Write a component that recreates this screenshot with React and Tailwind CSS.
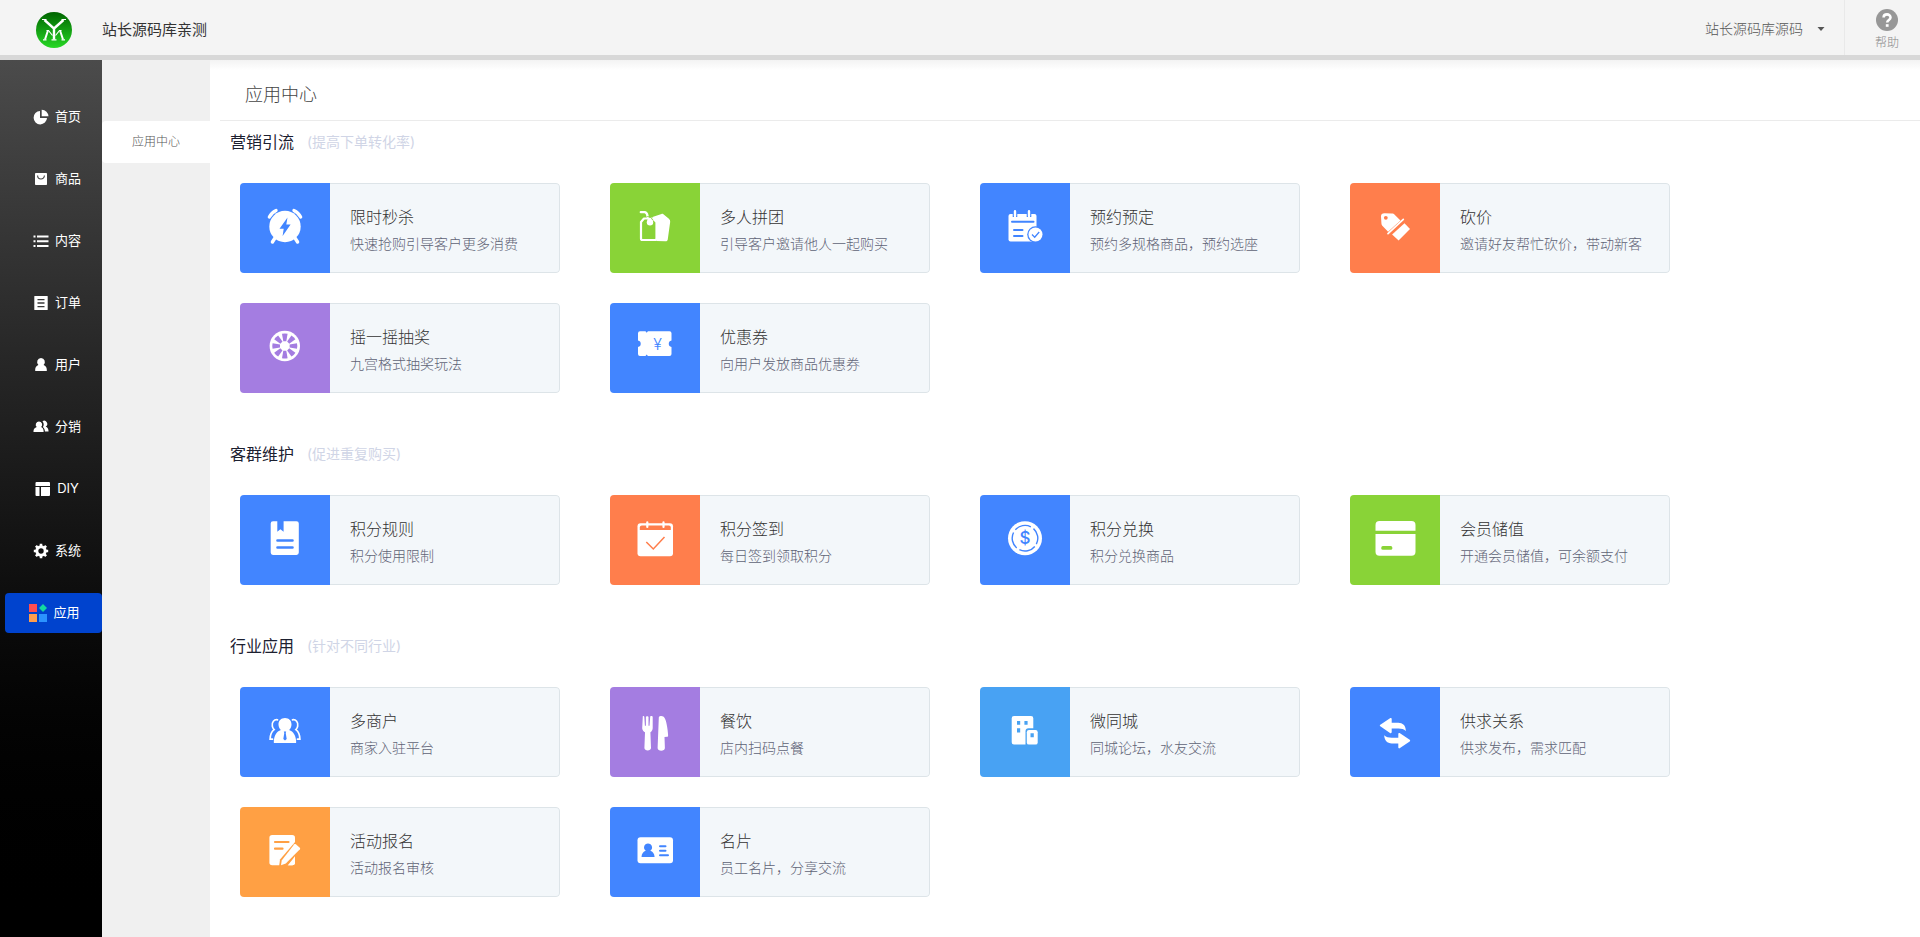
import { useState } from 'react';

const menu = [
  { key: 'home', label: '首页' },
  { key: 'goods', label: '商品' },
  { key: 'content', label: '内容' },
  { key: 'order', label: '订单' },
  { key: 'user', label: '用户' },
  { key: 'share', label: '分销' },
  { key: 'diy', label: 'DIY' },
  { key: 'setting', label: '系统' },
  { key: 'apps', label: '应用' },
];

const groups = [
  {
    title: '营销引流',
    note: '(提高下单转化率)',
    apps: [
      { icon: 'clock', bg: 'bg-[#4285ff]', name: '限时秒杀', desc: '快速抢购引导客户更多消费' },
      { icon: 'tags', bg: 'bg-[#89d337]', name: '多人拼团', desc: '引导客户邀请他人一起购买' },
      { icon: 'booking', bg: 'bg-[#4285ff]', name: '预约预定', desc: '预约多规格商品，预约选座' },
      { icon: 'bargain', bg: 'bg-[#ff7e4c]', name: '砍价', desc: '邀请好友帮忙砍价，带动新客' },
      { icon: 'wheel', bg: 'bg-[#a47de1]', name: '摇一摇抽奖', desc: '九宫格式抽奖玩法' },
      { icon: 'coupon', bg: 'bg-[#4285ff]', name: '优惠券', desc: '向用户发放商品优惠券' },
    ],
  },
  {
    title: '客群维护',
    note: '(促进重复购买)',
    apps: [
      { icon: 'rules', bg: 'bg-[#4285ff]', name: '积分规则', desc: '积分使用限制' },
      { icon: 'signin', bg: 'bg-[#ff7e4c]', name: '积分签到', desc: '每日签到领取积分' },
      { icon: 'coin', bg: 'bg-[#4285ff]', name: '积分兑换', desc: '积分兑换商品' },
      { icon: 'card', bg: 'bg-[#89d337]', name: '会员储值', desc: '开通会员储值，可余额支付' },
    ],
  },
  {
    title: '行业应用',
    note: '(针对不同行业)',
    apps: [
      { icon: 'merchant', bg: 'bg-[#4285ff]', name: '多商户', desc: '商家入驻平台' },
      { icon: 'food', bg: 'bg-[#a47de1]', name: '餐饮', desc: '店内扫码点餐' },
      { icon: 'city', bg: 'bg-[#48a2f3]', name: '微同城', desc: '同城论坛，水友交流' },
      { icon: 'supply', bg: 'bg-[#4285ff]', name: '供求关系', desc: '供求发布，需求匹配' },
      { icon: 'form', bg: 'bg-[#ffa044]', name: '活动报名', desc: '活动报名审核' },
      { icon: 'idcard', bg: 'bg-[#4285ff]', name: '名片', desc: '员工名片，分享交流' },
    ],
  },
];

const menuIcons = {
  home: (
    <>
      <path d="M7 2a6.7 6.7 0 1 0 7 7H7z" />
      <path d="M8.7 0.8a6.7 6.7 0 0 1 6.8 6.5H8.7z" />
    </>
  ),
  goods: (
    <>
      <rect x="2" y="2" width="12" height="12" rx="0.8" />
      <path d="M4.6 4.5c0 4.6 6.8 4.6 6.8 0" fill="none" stroke="#444" strokeWidth="1.1" />
    </>
  ),
  content: (
    <path d="M0.5 2.5h2v2h-2zM4 2.5h11.5v2H4zM0.5 7.2h2v2h-2zM4 7.2h11.5v2H4zM0.5 12h2v2h-2zM4 12h11.5v2H4z" />
  ),
  order: (
    <>
      <rect x="1.3" y="1" width="13.4" height="14" rx="0.5" />
      <path d="M4.5 4.6h7M4.5 8h7M4.5 11.6h7" stroke="#383838" strokeWidth="1.4" />
    </>
  ),
  user: (
    <path d="M8 1a4 4 0 0 1 2.6 6.9c2 .8 3.2 2.4 3.2 4.6V14H2.2v-1.5c0-2.2 1.2-3.8 3.2-4.6A4 4 0 0 1 8 1z" />
  ),
  share: (
    <>
      <path d="M6 2.6a3.2 3.2 0 0 1 2.2 5.5c1.5.7 2.4 2.1 2.4 3.9V13H.5v-1c0-1.8 1.3-3.2 3.2-3.9A3.2 3.2 0 0 1 6 2.6z" />
      <path d="M9.5 2.2a3 3 0 0 1 3.2 5.3c1.8.9 2.8 2.5 2.8 4.2V12.6h-3.6c0-2-.7-3.5-2-4.7 1.2-1.6 1.1-3.9-.4-5.7z" />
    </>
  ),
  diy: (
    <path d="M1.5 1h12.5a1 1 0 0 1 1 1v3H.5V2a1 1 0 0 1 1-1zM.5 6h4v9h-3a1 1 0 0 1-1-1zM6 6h9v8a1 1 0 0 1-1 1H6z" />
  ),
  setting: (
    <>
      <circle cx="8" cy="8" r="4.2" fill="none" stroke="#fff" strokeWidth="3" />
      <path
        d="M8 .8v3M8 12.2v3M.8 8h3M12.2 8h3M2.9 2.9l2 2M11.1 11.1l2 2M2.9 13.1l2-2M11.1 4.9l2-2"
        stroke="#fff"
        strokeWidth="2.6"
      />
    </>
  ),
};

function MenuIcon({ name }) {
  if (name === 'apps') {
    return (
      <svg className="h-[18px] w-[18px]" viewBox="0 0 18 18" aria-hidden="true">
        <rect x="0" y="0" width="8" height="8" fill="#ff4d4f" />
        <path d="M14 0l4 4-4 4-4-4z" fill="#13d8a0" />
        <rect x="0" y="10" width="8" height="8" fill="#ff9d4d" />
        <rect x="10" y="10" width="8" height="8" fill="#2b93ff" />
      </svg>
    );
  }
  return (
    <svg className="h-4 w-4" viewBox="0 0 16 16" fill="#fff" aria-hidden="true">
      {menuIcons[name]}
    </svg>
  );
}

// white shapes, details are cut out in the colour of the tile
const appIcons = {
  clock: (
    <>
      <circle cx="20" cy="20.5" r="15.7" />
      <path d="M4.3 11c1.5-3 4-5.2 6.8-6.5M35.7 11c-1.5-3-4-5.2-6.8-6.5" fill="none" stroke="#fff" strokeWidth="3.2" strokeLinecap="round" />
      <path d="M10 32l-2.6 4M30 32l2.6 4" stroke="#fff" strokeWidth="3.4" strokeLinecap="round" />
      <path d="M22.5 11.5l-8 11.2h4.2L17.6 30l8-11.5h-4.3z" fill="#4285ff" />
    </>
  ),
  tags: (
    <>
      <path d="M9 12.5h9l3.5 3.5v16.5a1.5 1.5 0 0 1-1.5 1.5H7.5A1.5 1.5 0 0 1 6 32.5V16z" fill="none" stroke="#fff" strokeWidth="2.2" strokeLinejoin="round" />
      <path d="M17.5 11l9-3.1c.6-.2 1.1-.1 1.6.2l5.5 4.3c1.4 1.2 1.8 2.4 1.5 4.2L32.8 33.3c-.3 1.6-1 2.1-2.6 2l-8.7-.3V16z" />
      <path d="M5.8 6.2h3.7c4.5 0 1.5 5.8 5.3 8.3" fill="none" stroke="#fff" strokeWidth="2.3" strokeLinecap="round" />
      <circle cx="15" cy="16.3" r="3.2" />
      <path d="M12.3 10.5c2.2.3 4.4 1.2 5.5 3.3" fill="none" stroke="#89d337" strokeWidth="1" />
    </>
  ),
  booking: (
    <>
      <rect x="3.5" y="8" width="28" height="27.5" rx="2" />
      <path d="M10 6.5V11M24 6.5V11" stroke="#4285ff" strokeWidth="4.6" />
      <path d="M10 5.3v4.7M24 5.3v4.7" stroke="#fff" strokeWidth="2.4" strokeLinecap="round" />
      <path d="M7 15.8h21.5M9 24h8.5M9 30h8.5" stroke="#4285ff" strokeWidth="2" strokeLinecap="round" />
      <circle cx="30.5" cy="28.5" r="8.3" fill="#4285ff" />
      <circle cx="30.5" cy="28.5" r="7" />
      <path d="M27 28.5l2.7 2.7 4.5-5.2" fill="none" stroke="#4285ff" strokeWidth="1.3" />
    </>
  ),
  bargain: (
    <>
      <path d="M9.5 7.2l7.3.3c1.3 0 2.2.5 3.1 1.4l5.6 5.5-12.4 11.4-5.3-5.5c-1-1-1.4-2-1.4-3.2L6 10.5c0-2.2 1.2-3.3 3.5-3.3z" />
      <circle cx="10.8" cy="11.8" r="1.9" fill="#ff7e4c" />
      <path d="M13 27.7L28.3 13.4" stroke="#fff" strokeWidth="1.7" strokeLinecap="round" />
      <path d="M29.5 17.2l5.5 5.9-11.4 11.4-6.5-6z" />
    </>
  ),
  wheel: (
    <>
      <circle cx="19.8" cy="20" r="15.2" />
      {[0, 45, 90, 135, 180, 225, 270, 315].map((deg) => (
        <path key={deg} d="M17 7.8q2.8-.7 5.6 0l-1.3 7.4h-3z" fill="#a47de1" transform={`rotate(${deg} 19.8 20)`} />
      ))}
    </>
  ),
  coupon: (
    <>
      <path d="M5 5.3h5.5l1.2 1.4 1.2-1.4H34.5a2 2 0 0 1 2 2v7.2a3.3 3.3 0 0 0 0 6.5v7a2 2 0 0 1-2 2H12.900l-1.200-1.400-1.200 1.400H5a2 2 0 0 1-2-2v-7a3.300 3.300 0 0 0 0-6.500V7.300a2 2 0 0 1 2-2z" />
      <text x="22.5" y="24" textAnchor="middle" fontSize="16" fill="#4285ff">¥</text>
    </>
  ),
  rules: (
    <>
      <path d="M8 3.3h4.3v10.4l3.1-2.4 3.2 2.4V3.3H31.5a2.3 2.3 0 0 1 2.3 2.3v29a2.3 2.3 0 0 1-2.3 2.3H8a2.3 2.3 0 0 1-2.3-2.3v-29A2.3 2.3 0 0 1 8 3.3z" />
      <path d="M12.5 22.5h15M12.5 29.5h15" stroke="#4285ff" strokeWidth="2.6" strokeLinecap="round" />
    </>
  ),
  signin: (
    <>
      <rect x="2.5" y="5.3" width="35.5" height="33" rx="3" />
      <path d="M4.8 12V9.5a2 2 0 0 1 2-2h27a2 2 0 0 1 2 2V12z" fill="#ff7e4c" />
      <path d="M12.3 4.3V9M28.5 4.3V9" stroke="#fff" strokeWidth="2.2" strokeLinecap="round" />
      <path d="M11.3 24l7 7L29.5 19" fill="none" stroke="#ff7e4c" strokeWidth="1.5" />
    </>
  ),
  coin: (
    <>
      <circle cx="20" cy="20.2" r="17" />
      <circle cx="20" cy="20.2" r="12.8" fill="none" stroke="#4285ff" strokeWidth="1.4" strokeDasharray="16.8 3.3" transform="rotate(40 20 20.2)" />
      <text x="20" y="26" textAnchor="middle" fontSize="17" fontWeight="500" fill="#4285ff">$</text>
    </>
  ),
  card: (
    <>
      <path d="M4.5 3h32a4 4 0 0 1 4 4v5.7H.5V7a4 4 0 0 1 4-4zM.5 16h40v17.700a4 4 0 0 1-4 4h-32a4 4 0 0 1-4-4z" />
      <rect x="6.3" y="28" width="11" height="3.8" rx="1.5" fill="#89d337" />
    </>
  ),
  merchant: (
    <>
      <path
        d="M12.5 9.8c-3.4-.6-5.9 2.5-5.2 6.3.3 1.6.9 2.6 1.8 3.5-2.5 1.8-3.9 5.2-4 9.6h2.4M27.5 9.8c3.4-.6 5.9 2.5 5.2 6.3-.3 1.6-.9 2.6-1.8 3.5 2.5 1.8 3.9 5.2 4 9.6h-2.4"
        fill="none"
        stroke="#fff"
        strokeWidth="1.7"
        strokeLinecap="round"
      />
      <path d="M20 8c4 0 6.7 2.8 6.5 6.7-.1 2.2-1 4-2.4 5.2 4.3 1.3 6.9 5.8 7.1 12 0 .8-.3 1.2-1 1.2H9.8c-.7 0-1.1-.4-1-1.2.2-6.2 2.7-10.7 7.1-12-1.4-1.2-2.3-3-2.4-5.2C13.3 10.8 16 8 20 8z" />
      <path d="M18.8 21.5h2.4l-.5 1.6 1 6L20 30.5l-1.7-1.4 1-6z" fill="#4285ff" />
    </>
  ),
  food: (
    <>
      <path d="M7.8 6.2c.7-.4 1.3-.2 1.5.5l.6 9h1V7c0-1 2.6-1 2.6 0v8.7h1l.7-9c.1-.9 2.5-.9 2.5.2v11.3c0 2-1.3 3.3-2.3 4.1l.6 15.7c0 3.3-6.6 3.3-6.6 0L10 22.3c-1.2-.8-2.8-2.1-2.8-4.1z" />
      <path d="M25.6 6.1c3.6-.5 5.1 3.2 6 7.8.8 4 1.5 8.7 1.5 11.6 0 .8-.3 1.2-1 1.3l-2.6.2.4 11c0 3.5-7.3 3.5-7.3 0l1.200-30.200c0-1 .8-1.600 1.800-1.700z" />
    </>
  ),
  city: (
    <>
      <path d="M9 6h17a2.3 2.3 0 0 1 2.3 2.3v10h-4.8a3 3 0 0 0-3 3v13.3H9a2.3 2.3 0 0 1-2.3-2.3v-24A2.3 2.3 0 0 1 9 6z" />
      <path d="M12 11h3.2v3.7H12zM19.4 11h3.2v3.7h-3.2zM12 18.3h3.2v4.3H12z" fill="#48a2f3" />
      <path d="M24 20h6.5a2.2 2.2 0 0 1 2.2 2.2v10.2a2.2 2.2 0 0 1-2.2 2.2h-6.5a2.2 2.2 0 0 1-2.2-2.2V22.2A2.2 2.2 0 0 1 24 20z" />
      <path d="M25.5 23.3h3.3v3.9h-3.3z" fill="#48a2f3" />
    </>
  ),
  supply: (
    <>
      <path d="M5.3 14.8L15 8.2c.9-.6 1.7-.2 1.7.9v3.7h6.5c4.5 0 7.5 2.8 7.6 7.6v.7c-2-1.8-4.2-2.5-7.4-2.5h-6.7v3.5c0 1-.8 1.4-1.7.8l-9.7-6.6c-.6-.4-.6-1.1 0-1.5z" />
      <path d="M34.7 29.8L25 23.2c-.9-.6-1.7-.2-1.7.9v3.7h-6.5c-3.2 0-5.5-.7-7.6-2.5.1 4.9 3 8.2 7.6 8.2h6.5v3.8c0 1 .8 1.4 1.7.8l9.7-6.7c.6-.4.6-1.2 0-1.6z" />
    </>
  ),
  form: (
    <>
      <rect x="4.4" y="5" width="25.6" height="30.3" rx="2.8" />
      <path d="M10 12h13.5M10 18.7h7.5" stroke="#ffa044" strokeWidth="2.2" strokeLinecap="round" />
      <path d="M30.5 11.5L37 17.3 22 36.5l-8 .5 1-7.5z" fill="#ffa044" />
      <path d="M30.8 14.2l4 3.6c.5.5.5 1 .1 1.5L20.8 33.5l-4.8 1.8.7-4.9L29.3 14.3c.5-.5 1-.5 1.5-.1z" />
      <path d="M23 35.3l7-7.2v4.4c0 1.8-1 2.8-2.8 2.8z" />
    </>
  ),
  idcard: (
    <>
      <rect x="2.5" y="7.2" width="35.5" height="26" rx="3" />
      <path d="M13 13.5a4 4 0 0 1 2.3 7.3c2.5.7 4.2 2.9 4.3 6.2H6.5c.1-3.3 1.8-5.5 4.3-6.2A4 4 0 0 1 13 13.5z" fill="#4285ff" />
      <path d="M25 16.3h5.5M25 20.7h5.5M25 25.2h8" stroke="#4285ff" strokeWidth="2" strokeLinecap="round" />
    </>
  ),
};

function Logo() {
  return (
    <svg className="h-9 w-9" viewBox="0 0 36 36" aria-hidden="true">
      <defs>
        <linearGradient id="logo-bg" x1="0" y1="0" x2="0" y2="1">
          <stop offset="0" stopColor="#006400" />
          <stop offset="1" stopColor="#27d825" />
        </linearGradient>
      </defs>
      <circle cx="18" cy="18" r="18" fill="url(#logo-bg)" />
      <path d="M8.5 8l9.5 8.5V27.5M27.5 8L18 16.5" fill="none" stroke="#fff" strokeWidth="2.4" />
      <path d="M6 7.5h4.5M25.5 7.5H30M15.5 27.8h5M7 27.8h3.5M25.5 27.8H29" stroke="#fff" strokeWidth="1.2" />
      <path d="M9 27.5l2.8-8.5M27 27.5L24.2 19" fill="none" stroke="#fff" strokeWidth="2" />
      <path d="M10.5 18.5h2l4 5M25.5 18.5h-2l-4 5" fill="none" stroke="#fff" strokeWidth="1.2" />
    </svg>
  );
}

function AppCard({ app }) {
  return (
    <a href="#" className="flex h-[90px] overflow-hidden rounded">
      <span className={`flex w-[90px] shrink-0 items-center justify-center pb-1 ${app.bg}`}>
        <svg className="h-10 w-10 overflow-visible" viewBox="0 0 40 40" fill="#fff" aria-hidden="true">
          {appIcons[app.icon]}
        </svg>
      </span>
      <span className="flex flex-1 flex-col justify-center gap-[3px] rounded-r border border-l-0 border-[#dde4e8] bg-[#f3f7fa] pt-[5px] pl-5">
        <span className="text-base/6 text-[#333]">{app.name}</span>
        <span className="text-sm/6 text-[#5f6376]">{app.desc}</span>
      </span>
    </a>
  );
}

export default function App() {
  const [active, setActive] = useState('apps');

  return (
    <div className="flex min-h-screen flex-col bg-white font-[Inter,'Noto_Sans_CJK_SC',sans-serif] font-light">
      <header className="flex h-[60px] border-b-[5px] border-[#d8d8d8] bg-[#f4f4f4]">
        <div className="flex flex-1 items-center gap-[30px] pt-1 pl-9">
          <Logo />
          <h1 className="pt-0.5 text-[15px] font-normal text-[#333]">站长源码库亲测</h1>
        </div>
        <button type="button" className="flex items-center gap-[14px] pt-0.5 pr-[19px] text-sm text-[#555]">
          站长源码库源码
          <svg className="h-2 w-2" viewBox="0 0 8 8" fill="#555" aria-hidden="true">
            <path d="M.5 2h7L4 6z" />
          </svg>
        </button>
        <a href="#" className="flex w-[76px] flex-col items-center border-l border-[#e9e9e9] pt-[9px] pl-[9px] text-xs/6 text-[#888]">
          <svg className="h-[22px] w-[22px]" viewBox="0 0 22 22" aria-hidden="true">
            <circle cx="11" cy="11" r="11" fill="#979797" />
            <path d="M7.6 8.5c0-4.2 6.9-4.2 6.9 0 0 2.4-3.3 2.5-3.3 5" fill="none" stroke="#fff" strokeWidth="2.6" />
            <rect x="9.8" y="15.2" width="2.8" height="2.6" fill="#fff" />
          </svg>
          帮助
        </a>
      </header>

      <div className="flex flex-1">
        <nav className="flex w-[102px] flex-col gap-[22px] bg-linear-to-b from-[#4b4b4b] to-black pt-[37px] pl-[5px]">
          {menu.map((item) => (
            <button
              key={item.key}
              type="button"
              onClick={() => setActive(item.key)}
              className={`flex h-10 items-center justify-center gap-[6px] rounded text-[13px] font-normal text-white ${
                active === item.key ? 'bg-[#0043ce] pl-0.5' : 'pl-[7px]'
              }`}
            >
              <MenuIcon name={item.key} />
              {item.label}
            </button>
          ))}
        </nav>

        <aside className="w-[108px] bg-[#f0f0f0] pt-[61px]">
          <a href="#" className="flex h-[42px] items-center justify-center rounded-l bg-white text-xs text-[#555]">
            应用中心
          </a>
        </aside>

        <main className="flex-1 bg-linear-to-b from-[#f3f3f3] to-white to-[10px] pb-10 pl-[10px]">
          <h2 className="border-b border-[#ebebeb] pt-[21px] pb-3 pl-[25px] text-lg/[27px] text-[#444]">应用中心</h2>
          <div className="flex flex-col gap-[49px] pt-[9px] pl-[10px]">
            {groups.map((group) => (
              <section key={group.title}>
                <h3 className="flex items-center gap-[13px] text-base/6 font-normal text-[#1c2030]">
                  {group.title}
                  <small className="text-sm/6 font-normal text-[#d0d5e6]">{group.note}</small>
                </h3>
                <div className="grid grid-cols-[repeat(auto-fill,320px)] gap-x-[50px] gap-y-[30px] pt-[29px] pl-[10px]">
                  {group.apps.map((app) => (
                    <AppCard key={app.name} app={app} />
                  ))}
                </div>
              </section>
            ))}
          </div>
        </main>
      </div>
    </div>
  );
}
